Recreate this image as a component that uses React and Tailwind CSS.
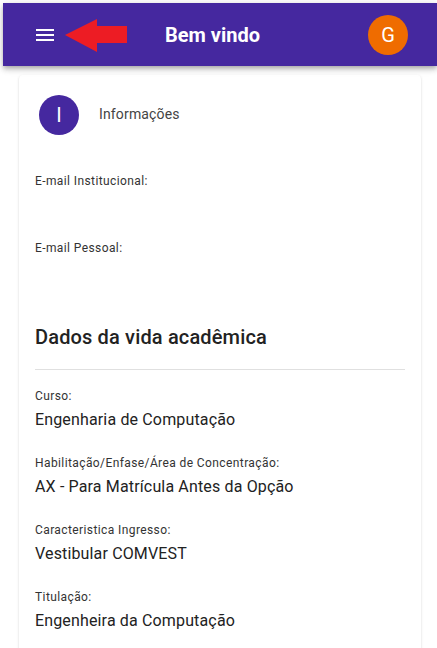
import React from 'react';

const Field = ({ label, value }) => (
  <div className="mb-[23px]">
    <div className="text-[12px] leading-[16px] tracking-[0.4px] text-[#333]">{label}</div>
    <div className="mt-[4px] h-[24px] text-[16px] leading-[24px] tracking-[0.15px] text-[#222]">{value}</div>
  </div>
);

export default function App() {
  return (
    <div className="relative h-[648px] w-[437px] overflow-hidden bg-white font-['Roboto',sans-serif]">
      {/* App bar */}
      <header className="relative z-10 ml-[3px] mt-[3px] flex h-[63px] items-center bg-[#45289f] shadow-[0px_2px_4px_-1px_rgba(0,0,0,0.2),0px_4px_5px_0px_rgba(0,0,0,0.14),0px_1px_10px_0px_rgba(0,0,0,0.12)]">
        <svg className="ml-[30px] h-6 w-6 shrink-0" viewBox="0 0 24 24" fill="white">
          <path d="M3 18h18v-2H3v2zm0-5h18v-2H3v2zm0-7v2h18V6H3z" />
        </svg>
        <h1 className="ml-[108px] text-[20px] font-bold leading-none text-white">Bem vindo</h1>
        <div className="ml-auto mr-[29px] flex h-10 w-10 items-center justify-center rounded-full bg-[#ef6c00] text-[20px] text-white">
          G
        </div>
      </header>

      {/* red annotation arrow */}
      <svg className="absolute left-0 top-0 z-20" width="140" height="60">
        <polygon points="65,35 97,19 97,26 127,26 127,43 97,43 97,52" fill="#ed1c24" />
      </svg>

      {/* Card */}
      <div className="ml-[19px] mt-[9px] w-[402px] rounded-[4px] bg-white pb-4 shadow-[0px_2px_1px_-1px_rgba(0,0,0,0.2),0px_1px_1px_0px_rgba(0,0,0,0.14),0px_1px_3px_0px_rgba(0,0,0,0.12)]">
        <div className="flex items-center px-5 pt-5">
          <div className="flex h-10 w-10 items-center justify-center rounded-full bg-[#45289f] text-[20px] text-white">
            I
          </div>
          <span className="-mt-[2px] ml-5 text-[14px] leading-[20px] tracking-[0.15px] text-[#444]">Informações</span>
        </div>

        <div className="px-4 pt-[38px]">
          <Field label="E-mail Institucional:" value="" />
          <Field label="E-mail Pessoal:" value="" />

          <h2 className="mt-[39px] text-[20px] font-medium leading-[28px] tracking-[0.15px] text-[#222]">
            Dados da vida acadêmica
          </h2>
          <div className="mt-[18px] h-px bg-[#e0e0e0]" />

          <div className="pt-[18px]">
            <Field label="Curso:" value="Engenharia de Computação" />
            <Field label="Habilitação/Enfase/Área de Concentração:" value="AX - Para Matrícula Antes da Opção" />
            <Field label="Caracteristica Ingresso:" value="Vestibular COMVEST" />
            <Field label="Titulação:" value="Engenheira da Computação" />
          </div>
        </div>
      </div>
    </div>
  );
}
